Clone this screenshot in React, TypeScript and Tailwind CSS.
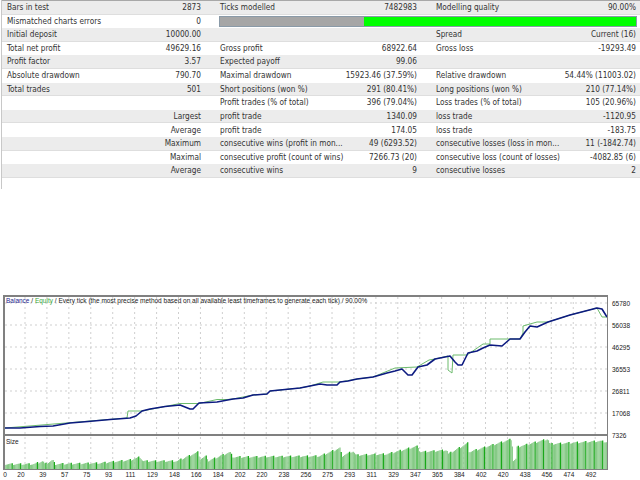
const rows = [
  ['Bars in test', '2873', 'Ticks modelled', '7482983', 'Modelling quality', '90.00%'],
  null,
  ['Initial deposit', '10000.00', '', '', 'Spread', 'Current (16)'],
  ['Total net profit', '49629.16', 'Gross profit', '68922.64', 'Gross loss', '-19293.49'],
  ['Profit factor', '3.57', 'Expected payoff', '99.06', '', ''],
  ['Absolute drawdown', '790.70', 'Maximal drawdown', '15923.46 (37.59%)', 'Relative drawdown', '54.44% (11003.02)'],
  ['Total trades', '501', 'Short positions (won %)', '291 (80.41%)', 'Long positions (won %)', '210 (77.14%)'],
  ['', '', 'Profit trades (% of total)', '396 (79.04%)', 'Loss trades (% of total)', '105 (20.96%)'],
  ['', 'Largest', 'profit trade', '1340.09', 'loss trade', '-1120.95'],
  ['', 'Average', 'profit trade', '174.05', 'loss trade', '-183.75'],
  ['', 'Maximum', 'consecutive wins (profit in mon...', '49 (6293.52)', 'consecutive losses (loss in mon...', '11 (-1842.74)'],
  ['', 'Maximal', 'consecutive profit (count of wins)', '7266.73 (20)', 'consecutive loss (count of losses)', '-4082.85 (6)'],
  ['', 'Average', 'consecutive wins', '9', 'consecutive losses', '2'],
];

const xLabels = ['0', '20', '39', '57', '75', '93', '111', '129', '148', '166', '184', '202', '220', '238', '256', '275', '293', '311', '329', '347', '365', '384', '402', '420', '438', '456', '474', '492'];
const yLabels = ['65780', '56038', '46295', '36553', '26811', '17068', '7326'];

// points are page coords, toPoints moves them to the plot's origin
const balance = [[5, 428], [20, 428], [40, 426.5], [53, 426], [70, 423], [88, 421.5], [110, 419.5], [130, 418], [136, 416], [142, 411], [150, 409], [165, 406.5], [180, 405], [190, 409], [193, 409], [199, 403], [217, 402], [233, 399], [243, 398], [253, 395], [267, 394], [270, 391], [300, 388], [310, 386], [320, 384], [327, 385], [337, 385], [340, 382], [348, 381], [357, 379], [373, 377], [387, 373], [395, 371], [402, 369], [408, 375], [412, 375], [418, 367], [427, 365], [435, 359], [450, 356], [455, 362], [458, 365], [462, 365], [468, 353], [477, 351], [483, 348], [490, 345], [502, 346], [510, 339], [520, 339], [525, 332], [530, 326], [537, 327], [548, 322], [570, 315], [597, 308], [602, 309], [607, 317]];

const equity = [[5, 428], [127, 418], [128, 411], [137, 411], [142, 411], [165, 406.5], [180, 403.5], [199, 403.5], [217, 399.5], [227, 399.5], [233, 399], [253, 395], [267, 394], [270, 391], [300, 388], [310, 386], [323, 382], [340, 382], [357, 379], [373, 377], [395, 368], [417, 367], [429, 360], [435, 359], [448, 356], [448, 370], [452, 373], [453, 355], [467, 355], [483, 344], [490, 344], [490, 339], [510, 339], [520, 339], [523, 333], [523, 326], [537, 322], [548, 322], [570, 315], [597, 308], [602, 317], [607, 317]];

// top edge of the size bars
const sizeEdge = [[3, 465], [34, 465], [43, 462], [45, 465], [53, 461], [55, 465], [100, 464], [130, 461], [140, 458], [143, 462], [177, 462], [198, 453], [200, 460], [207, 457], [208, 462], [230, 453], [233, 458], [320, 457], [340, 449], [342, 457], [353, 452], [356, 456], [387, 455], [418, 447], [420, 453], [447, 451], [448, 455], [468, 444], [469, 453], [512, 440], [513, 462], [516, 460], [517, 448], [548, 440], [550, 445], [600, 442], [607, 443]];

const sizeAt = (x: number) => {
  for (let i = 1; i < sizeEdge.length; i++) {
    const [x0, y0] = sizeEdge[i - 1];
    const [x1, y1] = sizeEdge[i];
    if (x <= x1) return y0 + ((y1 - y0) * (x - x0)) / (x1 - x0 || 1);
  }
  return 443;
};

const toPoints = (pts: number[][]) => pts.map(([x, y]) => `${x - 5},${y - 297}`).join(' ');

const gridX = Array.from({ length: 27 }, (_, i) => 25 + i * 21.93 - 5);
const gridY = [303, 325, 347, 369, 391, 413];

function ResultsTable() {
  return (
    <div className="ml-[1px] shrink-0 h-[189px] border-l border-[#c8c8c8]">
      <div className="border-t border-[#a8a8a8]">
        {rows.map((row, i) => {
          if (!row) {
            return (
              <div key={i} className="h-[13.6px] bg-white pl-[5px] pr-[4px] grid grid-cols-[194px_19px_197px_19px_200px] items-center">
                <div className="col-start-1 row-start-1">Mismatched charts errors</div>
                <div className="col-start-1 row-start-1 text-right">0</div>
                <div className="col-start-3 col-span-3 row-start-1 flex h-[11px] ml-[-1px] mr-[-1px] border border-[#8a9aa8]">
                  <div className="w-[144px] bg-[#a6a6a6]" />
                  <div className="flex-1 bg-[#00ff00]" />
                </div>
              </div>
            );
          }
          return (
            <div key={i} className={`h-[13.6px] pl-[5px] pr-[4px] grid grid-cols-[194px_19px_197px_19px_200px] items-center ${i % 2 === 0 ? 'bg-[#ececec] border-b border-[#dedede]' : 'bg-white'}`}>
              <div className="col-start-1 row-start-1">{row[0]}</div>
              <div className="col-start-1 row-start-1 text-right">{row[1]}</div>
              <div className="col-start-3 row-start-1">{row[2]}</div>
              <div className="col-start-3 row-start-1 text-right">{row[3]}</div>
              <div className="col-start-5 row-start-1">{row[4]}</div>
              <div className="col-start-5 row-start-1 text-right">{row[5]}</div>
            </div>
          );
        })}
      </div>
    </div>
  );
}

function Chart() {
  const bars = Array.from({ length: 501 }, (_, i) => 5 + i * 1.205);
  return (
    <div className="flex shrink-0 font-['Liberation_Sans',Arial,sans-serif] text-[6.5px] text-[#222]">
      <div className="w-[608px] pl-[3px]">
        <div className="relative h-[175px] border-t-2 border-l-2 border-r border-b border-[#808080] bg-white">
          <svg className="block" width="602" height="172" viewBox="0 0 602 172">
            {gridX.map((x) => (
              <line key={x} x1={x} x2={x} y1="0" y2="172" stroke="#cfcfcf" strokeDasharray="2 3" />
            ))}
            {gridY.map((y) => (
              <line key={y} x1="0" x2="602" y1={y - 297} y2={y - 297} stroke="#cfcfcf" strokeDasharray="2 3" />
            ))}
            {bars.map((x, i) => (
              <line key={i} x1={x - 5} x2={x - 5} y1={sizeAt(x) - 297 - (i % 7) * 0.3} y2="172" stroke={i % 7 === 6 ? '#18a818' : '#86ca86'} strokeWidth="1.25" />
            ))}
            <rect x="0" y="137" width="602" height="2" fill="#808080" />
            <polyline points={toPoints(equity)} fill="none" stroke="#6dbb6d" strokeWidth="1" />
            <polyline points={toPoints(balance)} fill="none" stroke="#0c1a80" strokeWidth="1.6" strokeLinejoin="round" />
          </svg>
          <div className="absolute left-[1px] top-0 leading-[8px] whitespace-nowrap">
            <span className="text-[#1c1c8c]">Balance</span> / <span className="text-[#3aa83a]">Equity</span> / Every tick (the most precise method based on all available least timeframes to generate each tick) / 90.00%
          </div>
          <div className="absolute left-[1px] top-[141px] leading-[8px]">Size</div>
        </div>
        <div className="grid grid-cols-[repeat(28,21.93px)] ml-[-15px] leading-[10px]">
          {xLabels.map((l, i) => (
            <div key={l} className={i === 0 ? 'text-right pr-[3px]' : 'text-center'}>{l}</div>
          ))}
        </div>
      </div>
      <div className="flex flex-col gap-[11px] pl-[4px] pt-[2.5px] leading-[11px]">
        {yLabels.map((l) => (
          <div key={l}>{l}</div>
        ))}
      </div>
    </div>
  );
}

export default function App() {
  return (
    <div className="font-['DejaVu_Sans_Condensed','DejaVu_Sans',sans-serif] w-[640px] h-[480px] bg-white overflow-hidden flex flex-col text-[8.2px] leading-[13px] text-[#333]">
      <ResultsTable />
      <div className="h-[106px] shrink-0" />
      <Chart />
    </div>
  );
}
